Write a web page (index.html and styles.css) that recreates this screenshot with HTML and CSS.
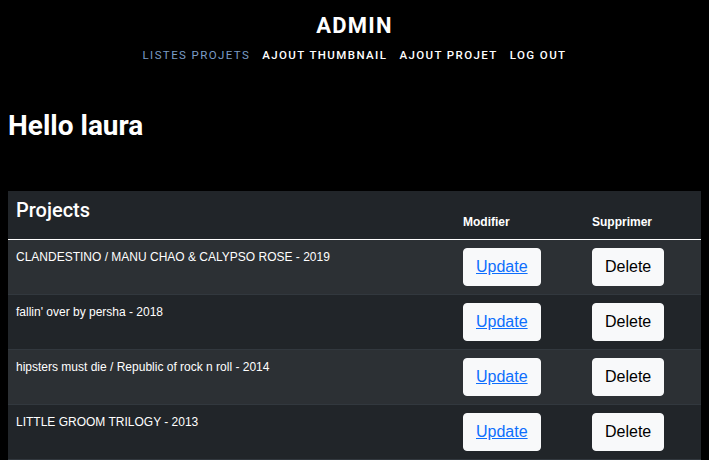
FILE: index.html
```html
<!DOCTYPE html>
<html lang="fr">
<head>
<meta charset="utf-8">
<title>Admin</title>
<link rel="stylesheet" href="styles.css">
</head>
<body>
<header class="site-header">
  <h1 class="brand">ADMIN</h1>
  <nav class="nav">
    <a class="nav-link active" href="#">LISTES PROJETS</a>
    <a class="nav-link" href="#">AJOUT THUMBNAIL</a>
    <a class="nav-link" href="#">AJOUT PROJET</a>
    <a class="nav-link" href="#">LOG OUT</a>
  </nav>
</header>
<main>
  <h2 class="greeting">Hello laura</h2>
  <table class="projects">
    <thead>
      <tr>
        <th class="col-title"><span class="th-big">Projects</span></th>
        <th class="col-mod">Modifier</th>
        <th class="col-del">Supprimer</th>
      </tr>
    </thead>
    <tbody>
      <tr class="odd">
        <td>CLANDESTINO / MANU CHAO &amp; CALYPSO ROSE - 2019</td>
        <td><a class="btn btn-link" href="#">Update</a></td>
        <td><button class="btn">Delete</button></td>
      </tr>
      <tr>
        <td>fallin' over by persha - 2018</td>
        <td><a class="btn btn-link" href="#">Update</a></td>
        <td><button class="btn">Delete</button></td>
      </tr>
      <tr class="odd">
        <td>hipsters must die / Republic of rock n roll - 2014</td>
        <td><a class="btn btn-link" href="#">Update</a></td>
        <td><button class="btn">Delete</button></td>
      </tr>
      <tr>
        <td>LITTLE GROOM TRILOGY - 2013</td>
        <td><a class="btn btn-link" href="#">Update</a></td>
        <td><button class="btn">Delete</button></td>
      </tr>
    </tbody>
  </table>
</main>
</body>
</html>
```

FILE: styles.css
```css
html, body {
  background: #000;
  color: #fff;
}
body {
  margin: 8px;
  font-family: "Liberation Sans", Arial, sans-serif;
}
.site-header {
  display: flex;
  flex-direction: column;
  align-items: center;
  padding-top: 6px;
}
.brand {
  margin: 0;
  font-family: Roboto, "Liberation Sans", sans-serif;
  font-weight: 700;
  font-size: 22px;
  letter-spacing: 1.2px;
  line-height: 24px;
}
.nav {
  display: flex;
  gap: 12px;
  margin-top: 10px;
}
.nav-link {
  font-family: Roboto, "Liberation Sans", sans-serif;
  font-weight: 500;
  font-size: 11.5px;
  letter-spacing: 1.4px;
  color: #fff;
  text-decoration: none;
  line-height: 14px;
}
.nav-link.active {
  color: #7a9cc6;
  font-weight: 400;
}
.greeting {
  margin: 48px 0 0;
  font-family: Roboto, "Liberation Sans", sans-serif;
  font-weight: 700;
  font-size: 28px;
  line-height: 32px;
}
.projects {
  margin-top: 49px;
  width: 100%;
  border-collapse: collapse;
  background: #212529;
  font-size: 12px;
}
.projects th {
  text-align: left;
  vertical-align: bottom;
  padding: 8px;
  font-size: 12px;
  font-weight: 700;
  line-height: 18px;
  border-bottom: 1px solid #fff;
}
.projects .th-big {
  display: block;
  font-family: Roboto, "Liberation Sans", sans-serif;
  font-size: 20px;
  font-weight: 500;
  line-height: 24px;
}
.projects th.col-title {
  vertical-align: top;
  padding-top: 7px;
  padding-bottom: 17px;
}
.col-mod { width: 113px; }
.col-del { width: 101px; }
.projects td {
  vertical-align: top;
  padding: 8px;
  line-height: 18px;
  border-bottom: 1px solid #32383e;
}
.projects tr.odd td {
  background: #2c3034;
}
.btn {
  display: inline-block;
  padding: 6px 12px;
  font-family: "Liberation Sans", Arial, sans-serif;
  font-size: 16px;
  line-height: 24px;
  color: #000;
  background: #f8f9fa;
  border: 1px solid #f8f9fa;
  border-radius: 4px;
  cursor: pointer;
}
.btn-link {
  color: #0d6efd;
  text-decoration: underline;
}
```
